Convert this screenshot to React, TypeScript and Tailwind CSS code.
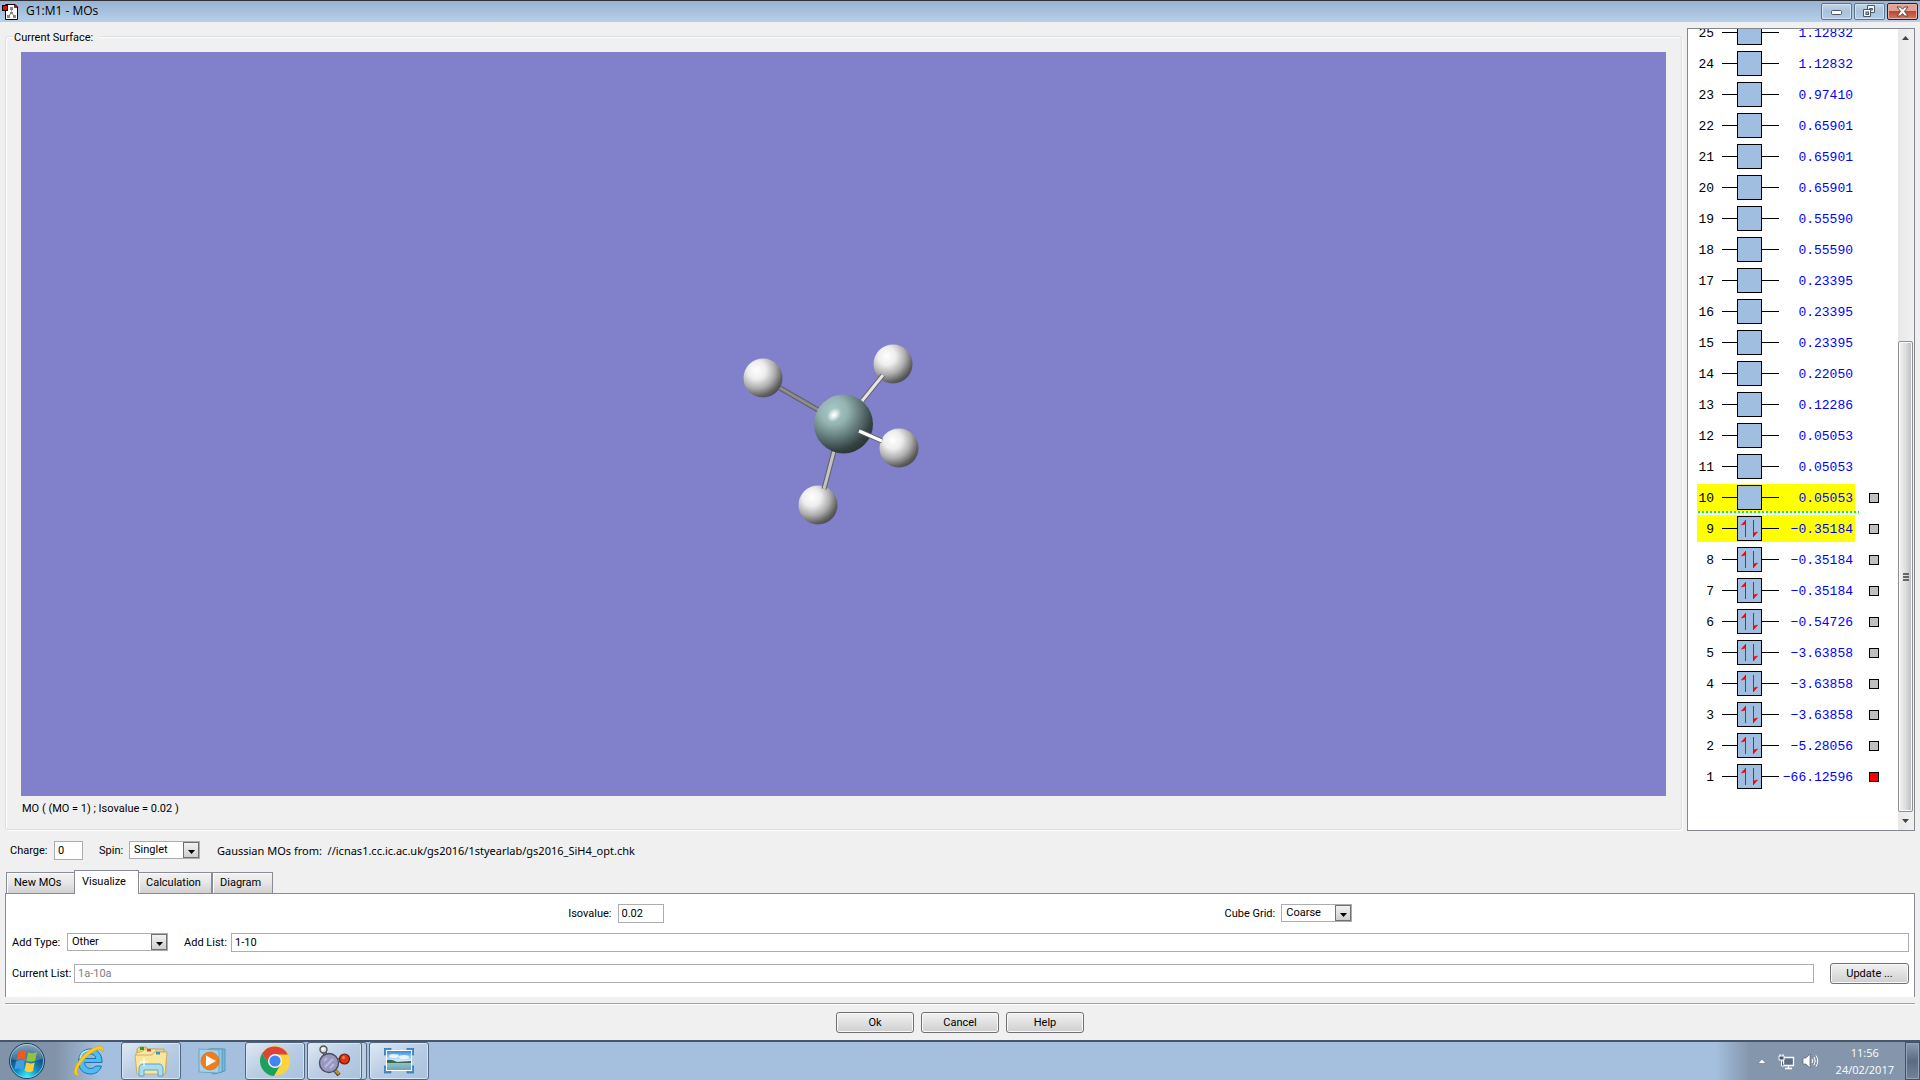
import { useState } from "react";
import type { ReactNode } from "react";
import { clsx } from "clsx";

type Orbital = {
  n: number;
  energy: string;
};

const ENERGIES = [
  "1.12832", "1.12832", "0.97410", "0.65901", "0.65901",
  "0.65901", "0.55590", "0.55590", "0.23395", "0.23395",
  "0.23395", "0.22050", "0.12286", "0.05053", "0.05053",
  "0.05053", "−0.35184", "−0.35184", "−0.35184", "−0.54726",
  "−3.63858", "−3.63858", "−3.63858", "−5.28056", "−66.12596",
];

const ORBITALS: Orbital[] = ENERGIES.map((energy, i) => ({ n: 25 - i, energy }));

const HOMO = 9;
const TABS = ["New MOs", "Visualize", "Calculation", "Diagram"];

const HYDROGENS = [
  { x: 763, y: 378 },
  { x: 893, y: 364 },
  { x: 899, y: 448 },
  { x: 818, y: 505 },
];

function AppIcon() {
  return (
    <svg width="17" height="17" viewBox="0 0 17 17" aria-hidden="true">
      <path d="M3.500 1.500H13L15.500 4V16.500H3.500Z" fill="#fff" stroke="#000" />
      <path d="M12.500 1V4.500H16Z" fill="#f00" stroke="#000" strokeWidth="0.6" />
      <path d="M9.500 5V10L6.500 13M9.500 10L12.500 13" stroke="#aaa" strokeWidth="1.2" fill="none" />
      <path d="M8 4h3v3h-3zM8 9h3v2h-3zM5 12h3v3h-3zM11 12h3v3h-3z" fill="#888" />
      <rect x="0.5" y="2.5" width="5" height="5" fill="#f00" stroke="#000" />
    </svg>
  );
}

function TitleBar() {
  const frame =
    "flex h-[17px] w-[31px] items-center justify-center rounded-[2px] border border-[#5c738c] bg-linear-to-b from-[#c3d5e9] via-[#a9c1da] to-[#b4cee8] shadow-[inset_0_0_0_1px_#d3e2f1]";
  return (
    <header className="flex h-[22px] shrink-0 items-center border-t border-[#2e3238] bg-linear-to-b from-[#98b2d0] to-[#b7d0ea] pr-[2px] pb-px pl-[2px]">
      <AppIcon />
      <h1 className="ml-[7px] flex-1 font-['Open_Sans',sans-serif] text-[12px] leading-4 text-black">G1:M1 - MOs</h1>
      <div className="flex gap-[2px]">
        <button type="button" aria-label="Minimize" className={frame}>
          <svg width="12" height="10" viewBox="0 0 12 10">
            <rect x="0.5" y="4.5" width="10" height="4" rx="1" fill="#fff" stroke="#4c5866" />
          </svg>
        </button>
        <button type="button" aria-label="Restore" className={frame}>
          <svg width="13" height="12" viewBox="0 0 13 12">
            <path d="M4.500.5H11.500V7.500H4.500Z" fill="#f4f7fa" stroke="#4c5866" />
            <path d="M6.500 3.500H9.500V5H6.500Z" fill="#9db4ce" stroke="#4c5866" />
            <path d="M.5 4.500H7.500V11.500H.5Z" fill="#f4f7fa" stroke="#4c5866" />
            <rect x="3" y="7" width="2.500" height="2.500" fill="#9db4ce" stroke="#4c5866" />
          </svg>
        </button>
        <button
          type="button"
          aria-label="Close"
          className="flex h-[17px] w-[31px] items-center justify-center rounded-[2px] border border-[#4d1010] bg-linear-to-b from-[#e2a193] from-45% via-[#bf4631] via-50% to-[#d4795f] shadow-[inset_0_0_0_1px_#e6b2a8]"
        >
          <svg width="13" height="11" viewBox="0 0 13 11">
            <path
              d="M1 1H4.500L6.500 3.200L8.500 1H12L8.500 5.300L12 10H8.500L6.500 7.600L4.500 10H1L4.500 5.300Z"
              fill="#f7f7f7"
              stroke="#4f4b58"
            />
          </svg>
        </button>
      </div>
    </header>
  );
}

function Bond({ from, to, color }: { from: [number, number]; to: [number, number]; color: string }) {
  return (
    <g>
      <line x1={from[0]} y1={from[1]} x2={to[0]} y2={to[1]} stroke="#5f5f5f" strokeWidth="5" />
      <line x1={from[0]} y1={from[1]} x2={to[0]} y2={to[1]} stroke={color} strokeWidth="3" />
    </g>
  );
}

function Molecule() {
  return (
    <svg className="absolute inset-0 h-full w-full" viewBox="21 52 1645 744" role="img" aria-label="SiH4 molecule">
      <defs>
        <radialGradient id="hydrogen" cx="0.34" cy="0.3" r="0.78">
          <stop offset="0" stopColor="#ffffff" />
          <stop offset="0.3" stopColor="#ededed" />
          <stop offset="0.6" stopColor="#adadad" />
          <stop offset="0.85" stopColor="#606060" />
          <stop offset="1" stopColor="#454545" />
        </radialGradient>
        <radialGradient id="silicon" cx="0.33" cy="0.28" r="0.78">
          <stop offset="0" stopColor="#a9caca" />
          <stop offset="0.3" stopColor="#94b3b2" />
          <stop offset="0.6" stopColor="#617777" />
          <stop offset="0.85" stopColor="#354242" />
          <stop offset="1" stopColor="#293434" />
        </radialGradient>
        <radialGradient id="shine">
          <stop offset="0" stopColor="#fff" />
          <stop offset="0.3" stopColor="#fff" stopOpacity="0.8" />
          <stop offset="1" stopColor="#fff" stopOpacity="0" />
        </radialGradient>
      </defs>
      {HYDROGENS.map((h) => (
        <circle key={h.x} cx={h.x} cy={h.y} r="19.5" fill="url(#hydrogen)" />
      ))}
      <Bond from={[780, 388]} to={[820, 411]} color="#8d8d8d" />
      <Bond from={[883, 375]} to={[862, 401]} color="#e4e4e4" />
      <Bond from={[834, 451]} to={[824, 489]} color="#c4c4c4" />
      <circle cx="843.500" cy="424" r="29.500" fill="url(#silicon)" />
      <ellipse cx="834" cy="415" rx="8" ry="6" transform="rotate(-45 834 415)" fill="url(#shine)" />
      <Bond from={[859, 431]} to={[882, 441]} color="#ffffff" />
    </svg>
  );
}

function OrbitalRow({ n, energy }: Orbital) {
  const occupied = n <= HOMO;
  const frontier = n === HOMO || n === HOMO + 1;
  return (
    <li className="relative flex h-[31px] shrink-0 items-center font-['Liberation_Mono',monospace] text-[13px] leading-4">
      <div className={clsx("flex h-[27px] w-[158px] items-center", frontier && "bg-[#ffff00]")}>
        <span className="w-[17px] pt-[2px] text-right text-black">{n}</span>
        <svg className="ml-2 shrink-0" width="57" height="25" viewBox="0 0 57 25" aria-hidden="true">
          <path d="M0 12.500H57" stroke="#000" />
          <rect x="15.500" y="0.500" width="24" height="24" fill="#a0bfe0" stroke="#000" />
          {occupied && (
            <g stroke="#f00" fill="#f00">
              <path d="M23.500 21V4M31.500 4V21" fill="none" />
              <path d="M23.500 4.500L19.500 9L23 8Z" strokeWidth="0.700" />
              <path d="M31.500 20.500L35.500 16L32 17Z" strokeWidth="0.700" />
            </g>
          )}
        </svg>
        <span className="flex flex-1 justify-end pt-[2px] pr-[2px] text-[#0000ff]">{energy}</span>
      </div>
      {n <= HOMO + 1 && (
        <button
          type="button"
          aria-label={`Surface ${n}`}
          className={clsx("ml-[14px] size-[10px] border border-black", n === 1 ? "bg-[#ff0000]" : "bg-[#c0c0c0]")}
        />
      )}
      {n === HOMO + 1 && (
        <span className="absolute bottom-0 left-px h-[2px] w-[161px] bg-[repeating-linear-gradient(90deg,#00ff00_0_2px,#fff_2px_4px)]" />
      )}
    </li>
  );
}

function OrbitalPanel() {
  return (
    <aside className="flex w-[228px] shrink-0 border border-[#828790] bg-white" aria-label="Orbital energies">
      <ol className="flex min-w-0 flex-1 flex-col justify-end overflow-hidden pb-[38px] pl-[9px]">
        {ORBITALS.map((o) => (
          <OrbitalRow key={o.n} {...o} />
        ))}
      </ol>
      <div className="flex w-4 flex-col bg-linear-to-r from-[#e8e8e8] to-[#f1f1f1] pr-px">
        <button type="button" aria-label="Scroll up" className="flex h-[17px] items-center justify-center">
          <svg width="7" height="4" viewBox="0 0 7 4"><path d="M0 4L3.500 0L7 4Z" fill="#444" /></svg>
        </button>
        <div className="flex-[296]" />
        <div className="flex flex-[470] flex-col items-center justify-center gap-px rounded-[2px] border border-[#8f8f8f] bg-linear-to-r from-[#f4f4f4] via-[#dedede] to-[#b9bbc0] shadow-[inset_0_0_0_1px_#fafafa]">
          <span className="h-[2px] w-[6px] bg-[#666]" />
          <span className="h-[2px] w-[6px] bg-[#666]" />
          <span className="h-[2px] w-[6px] bg-[#666]" />
        </div>
        <button type="button" aria-label="Scroll down" className="flex h-[18px] items-center justify-center">
          <svg width="7" height="4" viewBox="0 0 7 4"><path d="M0 0L3.500 4L7 0Z" fill="#444" /></svg>
        </button>
      </div>
    </aside>
  );
}

function Picker({ id, options, className }: { id: string; options: string[]; className: string }) {
  return (
    <div className={clsx("relative h-[18px] self-start border border-[#abadb3] bg-white", className)}>
      <select id={id} className="block h-4 w-full appearance-none bg-transparent pl-1 leading-[14px] outline-none">
        {options.map((o) => (
          <option key={o}>{o}</option>
        ))}
      </select>
      <span className="pointer-events-none absolute top-0 right-0 flex h-4 w-4 items-center justify-center border border-[#707070] bg-linear-to-b from-[#f2f2f2] to-[#cfcfcf] pt-1">
        <svg width="7" height="4" viewBox="0 0 7 4"><path d="M0 0H7L3.500 4Z" fill="#000" /></svg>
      </span>
    </div>
  );
}

function PushButton({ children, className }: { children: ReactNode; className: string }) {
  return (
    <button
      type="button"
      className={clsx(
        "h-[21px] rounded-[3px] border border-[#707070] bg-linear-to-b from-[#f2f2f2] via-[#e0e0e0] to-[#cfcfcf] leading-4 shadow-[inset_0_0_0_1px_#f8f8f8]",
        className,
      )}
    >
      {children}
    </button>
  );
}

const field = "h-[19px] border border-[#abadb3] bg-white px-[3px] outline-none";

function VisualizeTab() {
  return (
    <section className="flex h-[104px] flex-col gap-[10px] border border-b-0 border-[#898c95] bg-white pt-[10px] pr-[5px] pl-[6px]">
      <div className="grid h-[19px] grid-cols-2">
        <div className="flex items-center justify-end pr-[297px]">
          <label htmlFor="isovalue" className="mr-[6px]">Isovalue:</label>
          <input id="isovalue" defaultValue="0.02" className={clsx(field, "w-[46px]")} />
        </div>
        <div className="flex items-center pl-[264px]">
          <label htmlFor="grid" className="mr-[6px]">Cube Grid:</label>
          <Picker id="grid" options={["Coarse", "Medium", "Fine"]} className="w-[71px]" />
        </div>
      </div>
      <div className="flex h-[19px] items-center">
        <label htmlFor="type" className="w-[55px]">Add Type:</label>
        <Picker id="type" options={["Other", "HOMO", "LUMO"]} className="w-[101px]" />
        <label htmlFor="list" className="ml-4 w-[47px]">Add List:</label>
        <input id="list" defaultValue="1-10" className={clsx(field, "min-w-0 flex-1")} />
      </div>
      <div className="mt-px flex h-[21px] items-center">
        <label htmlFor="current" className="w-[62px] whitespace-nowrap">Current List:</label>
        <input id="current" readOnly value="1a-10a" className={clsx(field, "min-w-0 flex-1 text-[#808080]")} />
        <PushButton className="ml-4 w-[79px]">Update ...</PushButton>
      </div>
    </section>
  );
}

function TaskButton({ label, open, className, children }: { label: string; open?: boolean; className: string; children: ReactNode }) {
  return (
    <button
      type="button"
      aria-label={label}
      className={clsx(
        "flex h-[38px] items-center justify-center",
        open &&
          "rounded-[3px] border border-[#53667d] bg-linear-to-br from-[#dfe9f4] via-[#b9cde4] to-[#a9c2de] shadow-[inset_0_0_0_1px_#d6e3f1]",
        className,
      )}
    >
      {children}
    </button>
  );
}

function StartOrb() {
  return (
    <svg width="38" height="38" viewBox="0 0 38 38" aria-hidden="true">
      <defs>
        <radialGradient id="orb" cx="0.5" cy="0.95" r="0.9">
          <stop offset="0" stopColor="#3ff0ff" />
          <stop offset="0.35" stopColor="#0f93c9" />
          <stop offset="0.7" stopColor="#104f82" />
          <stop offset="1" stopColor="#5f87a5" />
        </radialGradient>
      </defs>
      <circle cx="19" cy="19" r="17.500" fill="url(#orb)" stroke="#1c3f63" />
      <circle cx="19" cy="19" r="16.500" fill="none" stroke="#a5cbe0" strokeWidth="0.8" />
      <path d="M4 17A15 15 0 0 1 34 17Q19 22 4 17Z" fill="#fff" opacity="0.22" />
      <path d="M10.500 10Q14.500 7 18.500 9.500L17 18Q13 15.500 8.500 18Z" fill="#ee5a24" />
      <path d="M20 10.300Q24 12.500 29 10L27 19Q22.500 20.800 18.500 18.600Z" fill="#8fc53c" />
      <path d="M8 19.500Q12.500 17 16.700 19.600L15 28Q11 25.500 6.500 27.500Z" fill="#3f9fe0" />
      <path d="M18.200 20.300Q22.500 22.500 26.700 20.500L25 29Q20.500 31.500 16.500 28.800Z" fill="#fecb35" />
    </svg>
  );
}

function ExplorerEIcon() {
  return (
    <svg width="32" height="32" viewBox="0 0 32 32" aria-hidden="true">
      <path
        d="M29 17.500H11.500C11.700 21 14 23.500 17.500 23.500C20 23.500 21.500 22.500 22.500 21H28.500C27 26 22.800 29 17.500 29C10.500 29 5.500 24 5.500 16.700C5.500 9 10.500 4 17.300 4C24.500 4 29.300 9 29 17.500ZM11.700 13.500H22.800C22.500 10.700 20.300 9 17.300 9C14.300 9 12.300 10.700 11.700 13.500Z"
        fill="#4fbdf0"
        stroke="#1673b4"
        strokeWidth="1"
      />
      <path d="M7 13C8 8.500 12 5.500 17 5.300" stroke="#b9ebff" strokeWidth="1.5" fill="none" />
      <path
        d="M7 30C1.500 31.500 0 28.500 2 23C5 14.500 14 5.500 22.500 2C28 -.2 31.500 1.500 30 7C29.500 4.500 27.500 3.500 24 5C15.500 8.500 7 17.500 4.500 24.500C3.500 27.500 4.500 29.500 7 30Z"
        fill="#fcca22"
        stroke="#e0a30c"
        strokeWidth="0.6"
      />
    </svg>
  );
}

function FolderIcon() {
  return (
    <svg width="34" height="32" viewBox="0 0 34 32" aria-hidden="true">
      <path d="M3 4L5 2H12L14 4H30V27H3Z" fill="#f0d481" stroke="#b99a45" strokeWidth="0.8" />
      <rect x="6" y="2" width="4" height="3" fill="#16a330" />
      <path d="M2 8L9 6L11 4H21L23 7H32V28H3Z" fill="#f8e7a5" stroke="#c4a656" strokeWidth="0.8" />
      <rect x="13" y="4" width="4" height="2.500" fill="#d9432f" />
      <path d="M1 10H18L20 7H33L31 29H3Z" fill="#f7e69c" stroke="#c4a656" strokeWidth="0.8" />
      <rect x="22" y="7" width="4" height="2.500" fill="#2b95d6" />
      <path d="M5 31V24Q5 19 10 19H25Q29 19 29 24V31H24V25H10V31Z" fill="#a9dcf0" stroke="#4d9fc4" strokeWidth="0.9" />
      <path d="M10 13V21M6 17H14" stroke="#fff" strokeWidth="1.2" />
    </svg>
  );
}

function MediaIcon() {
  return (
    <svg width="30" height="28" viewBox="0 0 30 28" aria-hidden="true">
      <path d="M12 2H27V24L16 27Z" fill="#74b8d9" stroke="#4b90b5" strokeWidth="0.8" />
      <path d="M10 2H24V25L14 27Z" fill="#94cbe4" stroke="#4b90b5" strokeWidth="0.8" />
      <path d="M1 2L21 3V26L1 25Z" fill="#a5d2e8" stroke="#5c9dbf" strokeWidth="0.8" />
      <circle cx="12" cy="14" r="9" fill="#f27d1c" stroke="#d8620c" strokeWidth="0.6" />
      <path d="M8 8.500L18 14L8 19.500Z" fill="#fff" />
    </svg>
  );
}

function ChromeIcon() {
  return (
    <svg width="30" height="30" viewBox="0 0 30 30" aria-hidden="true">
      <circle cx="15" cy="15" r="15" fill="#fdd23f" />
      <path d="M2 7.500L9.300 18.300L15 15L15 8.500L28 8.500A15 15 0 0 0 2 7.500Z" fill="#db4437" />
      <path d="M2 7.500L9.300 18.300L15 21L20.700 18.300L14 30A15 15 0 0 1 2 7.500Z" fill="#1ba15d" />
      <circle cx="15" cy="15" r="7" fill="#f4f7fc" />
      <circle cx="15" cy="15" r="5.600" fill="#4285f4" />
    </svg>
  );
}

function GaussIcon() {
  return (
    <svg width="33" height="33" viewBox="0 0 33 33" aria-hidden="true">
      <path d="M6 7L9 13M19 16L25 14M15 23L21 30" stroke="#333" strokeWidth="4" />
      <path d="M6 7L9 13M19 16L25 14" stroke="#d5d5d5" strokeWidth="2" />
      <path d="M16 24L21 29" stroke="#c98b2c" strokeWidth="3" />
      <circle cx="5.500" cy="4.500" r="3.500" fill="#d8d8d8" stroke="#555" strokeWidth="1.400" />
      <circle cx="5" cy="4" r="1.500" fill="#fff" />
      <circle cx="11" cy="18" r="9.500" fill="#9899c3" stroke="#4c4c5a" strokeWidth="1.400" />
      <path d="M6 16l3-3M7 22l8-8M12 23l4-4" stroke="#b9bade" strokeWidth="2" />
      <circle cx="26.500" cy="14" r="5" fill="#e8340c" stroke="#5a1d10" strokeWidth="1.200" />
      <circle cx="25.500" cy="12.500" r="1.500" fill="#ff7a45" />
    </svg>
  );
}

function PictureIcon() {
  return (
    <svg width="30" height="26" viewBox="0 0 30 26" aria-hidden="true">
      <defs>
        <linearGradient id="sky" x1="0" y1="0" x2="0" y2="1">
          <stop offset="0" stopColor="#2f8be6" />
          <stop offset="0.5" stopColor="#d3ecfb" />
          <stop offset="0.65" stopColor="#8dbfd8" />
          <stop offset="1" stopColor="#6fa6a8" />
        </linearGradient>
      </defs>
      <path d="M0 0H7V7H0ZM23 0H30V7H23ZM0 18H7V25H0ZM23 18H30V25H23Z" fill="#4991d0" stroke="#2b6aa8" strokeWidth="0.6" />
      <rect x="2" y="2" width="26" height="21" fill="#fff" />
      <rect x="3" y="3" width="24" height="19" fill="url(#sky)" />
      <ellipse cx="10" cy="8" rx="5" ry="2" fill="#fff" opacity="0.8" />
      <ellipse cx="20" cy="9" rx="5" ry="2" fill="#fff" opacity="0.8" />
      <path d="M3 12Q8 11 13 14L27 13V15H3Z" fill="#3f6b4a" />
    </svg>
  );
}

function Taskbar() {
  return (
    <footer className="flex h-10 shrink-0 items-stretch border-t-2 border-[#47566a] bg-linear-[90deg,#8193a9_0,#8193a9_55px,#a5c0de_100px,#a5c0de_calc(100%_-_205px),#8396ac_calc(100%_-_170px)]">
      <TaskButton label="Start" className="ml-2 w-[38px]"><StartOrb /></TaskButton>
      <TaskButton label="Internet Explorer" className="ml-[13px] w-[60px]"><ExplorerEIcon /></TaskButton>
      <TaskButton label="File Explorer" open className="ml-[2px] w-[60px]"><FolderIcon /></TaskButton>
      <TaskButton label="Media Player" className="ml-[2px] w-[60px]"><MediaIcon /></TaskButton>
      <TaskButton label="Chrome" open className="ml-[2px] w-[60px]"><ChromeIcon /></TaskButton>
      <div className="ml-[2px] flex rounded-[3px] border border-[#53667d] bg-[#b9cde4] pr-1">
        <TaskButton label="GaussView" open className="-my-px -ml-px w-[55px]"><GaussIcon /></TaskButton>
      </div>
      <TaskButton label="Pictures" open className="ml-[2px] w-[60px]"><PictureIcon /></TaskButton>
      <div className="flex-1" />
      <div className="flex items-center">
        <button type="button" aria-label="Show hidden icons">
          <svg width="8" height="5" viewBox="0 0 8 5"><path d="M0 4.500L4 0L8 4.500Z" fill="#fff" stroke="#4f5f73" strokeWidth="0.5" /></svg>
        </button>
        <svg className="ml-3" width="17" height="17" viewBox="0 0 17 17" aria-label="Network">
          <path d="M5.500 4.500H15.500V12.500H5.500Z" fill="#5d6f85" stroke="#fff" strokeWidth="1.300" />
          <path d="M10.500 13V15M7 15.500H14" stroke="#fff" strokeWidth="1.300" />
          <path d="M1 3H6V7H1ZM2 1V3M5 1V3M3.500 7V13H6" fill="#44546a" stroke="#fff" />
        </svg>
        <svg className="ml-[7px]" width="17" height="16" viewBox="0 0 17 16" aria-label="Volume">
          <path d="M1 5H4L8 1V15L4 11H1Z" fill="#fff" stroke="#46566a" strokeWidth="0.600" />
          <path d="M10 6Q11.500 8 10 10M12 4Q14.500 8 12 12M14 2.500Q17.500 8 14 13.500" stroke="#fff" fill="none" />
        </svg>
        <time className="mr-[11px] ml-[17px] text-center font-['Open_Sans',sans-serif] text-[11px] leading-[17px] text-white">
          11:56
          <br />
          24/02/2017
        </time>
        <button
          type="button"
          aria-label="Show desktop"
          className="h-full w-[15px] border border-[#42526a] bg-linear-to-b from-[#8c9bb0] via-[#5a6b82] to-[#73849a] shadow-[inset_0_0_0_1px_#93a3b7]"
        />
      </div>
    </footer>
  );
}

export default function App() {
  const [tab, setTab] = useState("Visualize");

  return (
    <div className="flex h-screen flex-col overflow-hidden bg-[#f0f0f0] font-['Roboto',sans-serif] text-[11px] leading-4 text-black">
      <TitleBar />

      <main className="flex min-h-0 flex-1 flex-col px-[5px] pt-[6px]">
        <div className="flex min-h-0 flex-1 gap-[5px]">
          <fieldset className="mb-px flex min-w-0 flex-1 flex-col rounded-[3px] border border-[#d5dfe5] px-[15px] pt-2 shadow-[inset_1px_1px_0_#fff,1px_1px_0_#fff]">
            <legend className="-ml-2 h-4 bg-[#f0f0f0] pt-[2px] pr-2 pl-px">Current Surface:</legend>
            <div className="relative min-h-0 flex-1 bg-[#8080cb]">
              <Molecule />
            </div>
            <p className="mt-[5px] mb-3 pl-px">MO ( (MO = 1) ; Isovalue = 0.02 )</p>
          </fieldset>
          <OrbitalPanel />
        </div>

        <div className="mt-[10px] flex h-[19px] items-center pl-[5px]">
          <label htmlFor="charge" className="w-11">Charge:</label>
          <input id="charge" defaultValue="0" className={clsx(field, "w-[29px]")} />
          <label htmlFor="spin" className="ml-4 w-[30px]">Spin:</label>
          <Picker id="spin" options={["Singlet", "Triplet"]} className="w-[71px]" />
          <p className="ml-[17px] font-['Noto_Sans',sans-serif] whitespace-pre">Gaussian MOs from:  //icnas1.cc.ic.ac.uk/gs2016/1styearlab/gs2016_SiH4_opt.chk</p>
        </div>

        <div role="tablist" className="relative mt-[10px] -mb-px flex h-6 items-end pl-px">
          {TABS.map((name) => (
            <button
              key={name}
              type="button"
              role="tab"
              aria-selected={tab === name}
              onClick={() => setTab(name)}
              className={clsx(
                "border border-[#898c95] px-[7px] text-left",
                tab === name
                  ? "h-6 border-b-0 bg-white pb-[2px]"
                  : "h-[22px] bg-linear-to-b from-[#f2f2f2] via-[#e6e6e6] to-[#d0d0d0] shadow-[inset_1px_1px_0_#fbfbfb]",
                name === "New MOs" && "w-[68px] border-r-0",
                name === "Visualize" && "w-[65px]",
                name === "Calculation" && "w-[73px] border-l-0",
                name === "Diagram" && "w-[61px]",
              )}
            >
              {name}
            </button>
          ))}
        </div>
        <VisualizeTab />

        <hr className="mt-[6px] border-t border-b border-t-[#a0a0a0] border-b-white" />
        <div className="flex h-[35px] items-start justify-center gap-[7px] pt-[7px]">
          <PushButton className="w-[78px]">Ok</PushButton>
          <PushButton className="w-[78px]">Cancel</PushButton>
          <PushButton className="w-[78px]">Help</PushButton>
        </div>
      </main>

      <Taskbar />
    </div>
  );
}
